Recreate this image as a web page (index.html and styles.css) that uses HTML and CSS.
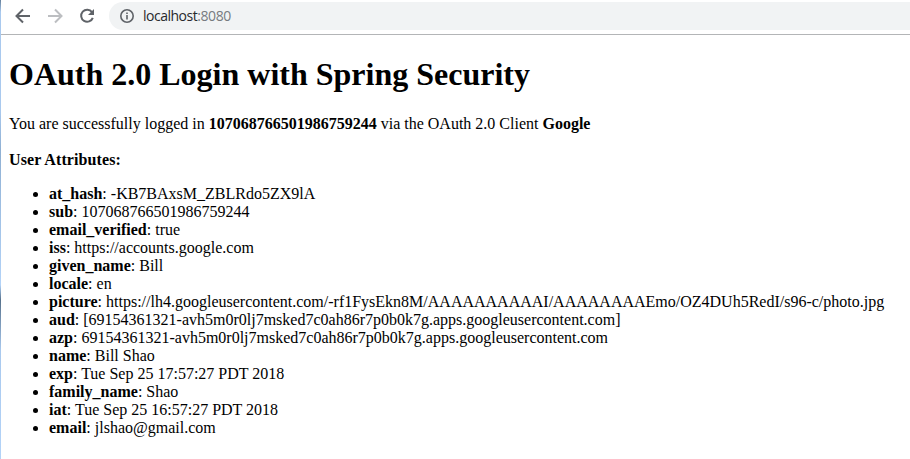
FILE: index.html
```html
<!DOCTYPE html>
<html lang="en">
<head>
<meta charset="utf-8">
<title>OAuth 2.0 Login</title>
<link rel="stylesheet" href="styles.css">
</head>
<body>
<header class="toolbar">
  <svg class="icon" viewBox="0 0 16 16"><path d="M15 8H2M8 1.5L1.500 8L8 14.500"/></svg>
  <svg class="icon forward" viewBox="0 0 16 16"><path d="M1 8H14M8 1.500L14.500 8L8 14.500"/></svg>
  <svg class="icon" viewBox="0 0 16 16"><path d="M13 4.200A6 6 0 1 0 13.800 9.800"/><path class="solid" d="M15 1V7H9Z"/></svg>
  <div class="address">
    <svg class="info" viewBox="0 0 14 14"><circle cx="7" cy="7" r="6.200"/><path d="M7 6V10.500M7 3.500V5"/></svg>
    <span class="url">localhost<span class="port">:8080</span></span>
  </div>
</header>
<main class="page">
  <h1>OAuth 2.0 Login with Spring Security</h1>
  <p class="status">You are successfully logged in <b>107068766501986759244</b> via the OAuth 2.0 Client <b>Google</b></p>
  <p class="label"><b>User Attributes:</b></p>
  <ul>
    <li><b>at_hash</b>: <span>-KB7BAxsM_ZBLRdo5ZX9lA</span></li>
    <li><b>sub</b>: <span>107068766501986759244</span></li>
    <li><b>email_verified</b>: <span>true</span></li>
    <li><b>iss</b>: <span>https://accounts.google.com</span></li>
    <li><b>given_name</b>: <span>Bill</span></li>
    <li><b>locale</b>: <span>en</span></li>
    <li><b>picture</b>: <span>https://lh4.googleusercontent.com/-rf1FysEkn8M/AAAAAAAAAAI/AAAAAAAAEmo/OZ4DUh5RedI/s96-c/photo.jpg</span></li>
    <li><b>aud</b>: <span>[69154361321-avh5m0r0lj7msked7c0ah86r7p0b0k7g.apps.googleusercontent.com]</span></li>
    <li><b>azp</b>: <span>69154361321-avh5m0r0lj7msked7c0ah86r7p0b0k7g.apps.googleusercontent.com</span></li>
    <li><b>name</b>: <span>Bill Shao</span></li>
    <li><b>exp</b>: <span>Tue Sep 25 17:57:27 PDT 2018</span></li>
    <li><b>family_name</b>: <span>Shao</span></li>
    <li><b>iat</b>: <span>Tue Sep 25 16:57:27 PDT 2018</span></li>
    <li><b>email</b>: <span>jlshao@gmail.com</span></li>
  </ul>
</main>
</body>
</html>
```
FILE: styles.css
```css
* { box-sizing: border-box; }
body { margin: 0; height: 459px; overflow: hidden; background: linear-gradient(#65809b 0, #a9c9ee 12px, #a9c9ee 110px, #8fb0d3 150px, #b3d3f8 285px, #56718c 300px, #a9c9ee 350px, #b3d3f8 459px) 0 0 / 1px 459px no-repeat #fff; color: #000; padding-left: 1px; font: 16px/18px "Liberation Serif", serif; }
.toolbar { display: flex; align-items: center; height: 35px; padding: 0 0 3px 14px; border-bottom: 1px solid #b3b5b7; gap: 16px; }
.icon { width: 16px; height: 16px; flex: none; fill: none; stroke: #5f6368; stroke-width: 2; }
.forward { stroke: #bcbec1; }
.icon .solid { fill: #5f6368; stroke: none; }
.address { display: flex; align-items: center; flex: 1; height: 28px; margin-left: -2px; padding-left: 11px; gap: 9px; border-radius: 14px 0 0 14px; background: #f1f3f4; }
.info { width: 14px; height: 14px; fill: none; stroke: #5f6368; stroke-width: 1.6; }
.url { font: 14px/18px "Open Sans", sans-serif; color: #27292c; letter-spacing: -0.5px; }
.port { color: #777b80; letter-spacing: -0.4px; }
.page { padding: 0 8px; white-space: nowrap; }
h1 { margin: 21px 0 22px; font-size: 32px; line-height: 37px; }
p { margin: 0 0 18px; }
.label { margin-bottom: 16px; letter-spacing: 0.1px; }
ul { margin: 0; padding-left: 40px; }
```
